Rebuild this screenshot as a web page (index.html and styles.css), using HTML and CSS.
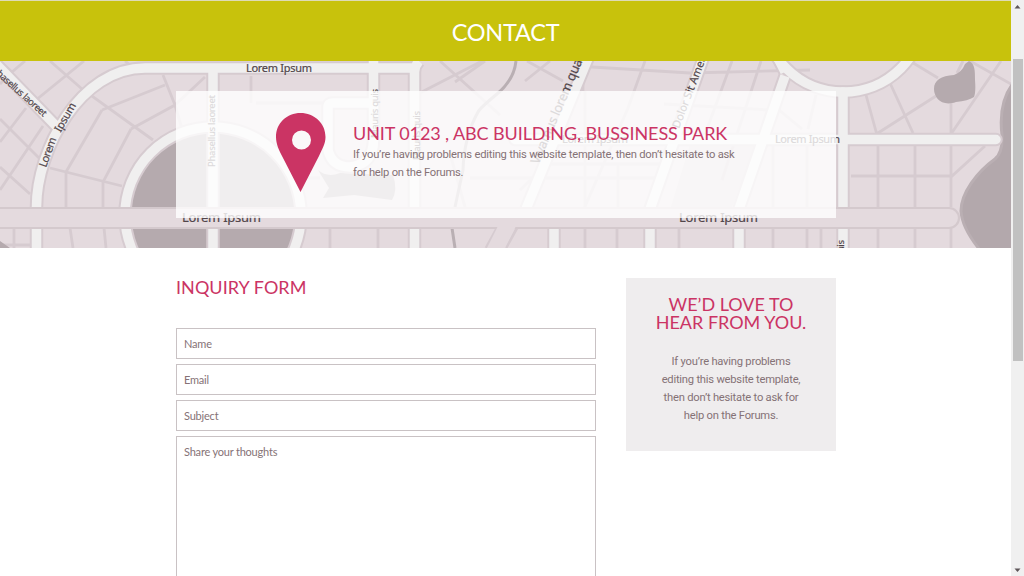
FILE: index.html
```html
<!DOCTYPE html>
<html lang="en">
<head>
<meta charset="utf-8">
<title>Contact</title>
<link rel="stylesheet" href="styles.css">
</head>
<body>
<div class="window">
  <div class="page">
    <header class="banner"><h1 class="banner-title">CONTACT</h1></header>
    <section class="hero">
      <svg class="map" viewBox="0 61 1011 187" aria-hidden="true">
        <defs>
          <g id="streets">
            <path d="M-5 63L60 130M36.500 252V207C36.500 150 80 68 145 68H414M213 68V207M213 228V250M373.500 61V100M373.500 68V140Q373.500 164 350 167Q332 167 328 150V107Q328 103 333 103H373M419 61Q414.500 66 414.500 72V250"/>
            <circle cx="213" cy="215" r="88"/>
            <path d="M589 56L526 209M704 56L649 212M650 228V250M554 228V250M739 228V250M785 76L739 209M777 56L785 72"/>
            <circle cx="843.500" cy="11" r="81"/>
            <path d="M843 92V250M515 139.500H996" stroke-linecap="round"/>
          </g>
        </defs>
        <rect class="land" y="61" width="1011" height="187"/>
        <g class="lane">
          <path d="M0 84L12 72L25 61M0 119L41 160M0 167L30 194M12 72L0 61M0 190L43 126M0 142L26 108M36 100L84 61M50 61L82 89L153 140M102 110L165 85M102 110L66 172V207M50 168L122 186M131 129L103 182V207M131 129L175 105L163 75M175 105L205 77M175 105L182 129M125 61L130 65M251 76V103M256 103H325M14 228V248M0 245H32M70 228L73 248M104 228L106 248"/>
          <path d="M330 228V248M378 228V248M440 61L500 115M410 98L482 61M455 82L485 61M497 228L486 248M550 61L525 81M527 61L563 81M583 61V91M576 66L690 73L810 70M645 61L628 108L580 218M732 61L707 129M761 61L722 180M585 91V207M618 164V207M512 178H655M664 104L770 110M520 190L547 164H665M585 228V248M617 228V248M679 228V248M517 228L506 248M773 105L802 129M808 129L816 95M807 145V207M773 145V207M773 228V248M807 228V248M821 228V248M449 150L465 207M256 178H320M470 178H535"/>
          <path d="M866 95L877 135M890 83L913 133M910 61L938 78M878 133L936 96M963 61L957 73M951 102V134L1001 61M970 61L1011 84M878 145V207M915 145V207M951 145V207M851 176H952L985 146M878 228V248M915 228V248M951 228V248"/>
        </g>
        <path class="lane dark-lane" d="M516 61Q514 80 497 94Q480 108 478 112Q464 137 463 170L455 207M452 228L455 248"/>
        <circle class="water" cx="213" cy="215" r="84"/>
        <path class="water" d="M318 170Q327 178 340 173L393 175Q398 190 392 200L354 195L323 198L329 188Z"/>
        <path class="water soft" d="M690 145H756L732 207H671Z"/>
        <path class="water" d="M0 241L10 248H0ZM969 61C975 64 975 70 975 80Q976 92 974 97Q968 101 956 102C942 107 934 98 934 89C934 80 941 76 954 75Q962 72 965 64Z"/>
        <path class="lake" d="M1014 82Q998 102 1002 135Q1003 152 995 159C977 172 961 193 961 211Q962 228 980 250H1014Z"/>
        <use href="#streets" class="casing"/>
        <use href="#streets" class="street"/>
        <rect class="avenue" x="-20" y="208" width="979" height="20" rx="10"/>
        <path class="land" d="M498 226H516L505 248H487Z"/>
        <g class="labels">
          <text x="246" y="71.500" textLength="66">Lorem Ipsum</text>
          <text x="182" y="222" class="big" textLength="79">Lorem Ipsum</text>
          <text x="679" y="222" class="big" textLength="79">Lorem Ipsum</text>
          <text x="562" y="143" textLength="66">Lorem Ipsum</text>
          <text x="775" y="143" textLength="65">Lorem Ipsum</text>
          <text transform="translate(-8 71) rotate(42)" class="small" textLength="69">Phasellus laoreet</text>
          <text transform="translate(46 168) rotate(-70)" textLength="31">Lorem</text>
          <text transform="translate(60.500 133) rotate(-60)" textLength="32">Ipsum</text>
          <text transform="translate(215 167) rotate(-90)" class="small" textLength="72">Phasellus laoreet</text>
          <text transform="translate(377.500 138) rotate(-90)" class="small" textLength="49">Mauris quis</text>
          <text transform="translate(420 160) rotate(-90)" class="small" textLength="49">Mauris quis</text>
          <text transform="translate(538.500 165) rotate(-67)" class="big" textLength="113">Vivamus lorem qua</text>
          <text transform="translate(679 129) rotate(-69)" textLength="75">Dolor Sit Amet</text>
          <text transform="translate(844 288) rotate(-90)" class="small" textLength="48">Mauris quis</text>
          <text transform="translate(127 254) rotate(-70)" class="small">l</text>
        </g>
      </svg>
      <div class="address">
        <svg class="pin" viewBox="0 0 50 80" aria-hidden="true"><path fill-rule="evenodd" d="M24.500 1C11 1 0 11 0 25C0 32 3 38 6 44L24.500 80L43 44C46 37 49.500 32 49.500 25C49.500 11 38 1 24.500 1ZM25.500 18.500A9.500 9.500 0 1 1 25.500 37.500A9.500 9.500 0 1 1 25.500 18.500Z"/></svg>
        <div class="address-copy">
          <h2 class="heading address-title">UNIT 0123 , ABC BUILDING, BUSSINESS PARK</h2>
          <p class="copy">If you’re having problems editing this website template, then don’t hesitate to ask<br>for help on the Forums.</p>
        </div>
      </div>
    </section>
    <main class="content">
      <form class="inquiry">
        <h2 class="heading inquiry-title">INQUIRY FORM</h2>
        <input class="field" placeholder="Name" aria-label="Name">
        <input class="field" placeholder="Email" aria-label="Email">
        <input class="field" placeholder="Subject" aria-label="Subject">
        <textarea class="field message" placeholder="Share your thoughts" aria-label="Message"></textarea>
      </form>
      <aside class="aside">
        <h2 class="heading aside-title">WE’D LOVE TO<br>HEAR FROM YOU.</h2>
        <p class="copy">If you’re having problems<br>editing this website template,<br>then don’t hesitate to ask for<br>help on the Forums.</p>
      </aside>
    </main>
  </div>
  <div class="scrollbar">
    <svg class="arrow" viewBox="0 0 7 4"><path d="M.500 3.500L3.500 0L6.500 3.500Z"/></svg>
    <div class="thumb"></div>
    <svg class="arrow arrow-down" viewBox="0 0 7 4"><path d="M.500 .500L3.500 4L6.500 .500Z"/></svg>
  </div>
</div>
</body>
</html>
```
FILE: styles.css
```css
* { box-sizing: border-box; }
body { margin: 0; overflow: hidden; background: #fff; }
h1, h2, p { margin: 0; font-weight: 400; }
.window { display: flex; height: 576px; overflow: hidden; }
.page { width: 1011px; flex: none; }
.banner {
  height: 61px;
  border-top: 1px solid #dedbb5;
  background: #c8c20c;
  display: flex;
  justify-content: center;
}
.banner-title { font: 23.5px/62px Lato, sans-serif; letter-spacing: -.25px; color: #fff; }

.hero { display: grid; height: 187px; }
.map { grid-area: 1 / 1; width: 1011px; height: 187px; }
.land { fill: #e4dade; }
.lane { fill: none; stroke: #d6cbd0; stroke-width: 2.8; }
.dark-lane { stroke: #b9afb3; stroke-width: 3; }
.water { fill: #b5aaae; }
.soft { opacity: .2; }
.lake { fill: #b3a8ac; stroke: #baafb3; stroke-width: 3; }
.casing { fill: none; stroke: #d6cbd0; stroke-width: 13.5; }
.street { fill: none; stroke: #f0efef; stroke-width: 9.5; }
.avenue { fill: #e4dade; stroke: #d4c9cd; stroke-width: 2.2; }
.labels { font: 11px "Noto Sans", sans-serif; fill: #51454a; stroke: #51454a; stroke-width: .2; }
.labels .big { font-size: 13px; }
.labels .small { font-size: 9.5px; }

.address {
  grid-area: 1 / 1;
  width: 660px;
  height: 127px;
  margin: 30px 0 0 176px;
  padding: 21px 0 0 100px;
  background: rgba(255, 255, 255, .8);
  display: flex;
  gap: 27px;
  z-index: 1;
}
.pin { width: 50px; height: 80px; flex: none; fill: #cb3464; }
.address-copy { padding-top: 12px; }
.heading { font: 18px/18px Lato, sans-serif; color: #cb3464; }
.address-title { margin-bottom: 4px; letter-spacing: -.1px; }
.copy { font: 11.2px/18px Roboto, sans-serif; letter-spacing: -.225px; color: #857276; white-space: nowrap; }

.content { display: flex; gap: 30px; padding: 30px 0 0 176px; }
.inquiry { width: 420px; display: flex; flex-direction: column; gap: 5px; }
.inquiry-title { height: 45px; line-height: 18px; letter-spacing: .05px; }
.field {
  width: 420px;
  height: 31px;
  margin: 0;
  padding: 0 7px 1px;
  border: 1px solid #c9c2c4;
  outline: 0;
  background: #fff;
  font: 11px/18px Lato, sans-serif;
  letter-spacing: -.2px;
  color: #857276;
  resize: none;
}
.field::placeholder { color: #857276; opacity: 1; }
.message { height: 220px; padding-top: 6px; }
.aside { width: 210px; height: 173px; padding-top: 17px; background: #efedee; text-align: center; }
.aside-title { margin-bottom: 22px; }

.scrollbar {
  width: 13px;
  height: 576px;
  background: #f0f0f0;
  display: flex;
  flex-direction: column;
  align-items: center;
  padding: 5px 0 4px;
}
.arrow { width: 7px; height: 4px; fill: #5d5558; }
.thumb { width: 10px; height: 302px; margin-top: 50px; background: #c1c1c1; }
.arrow-down { margin-top: auto; }
```
